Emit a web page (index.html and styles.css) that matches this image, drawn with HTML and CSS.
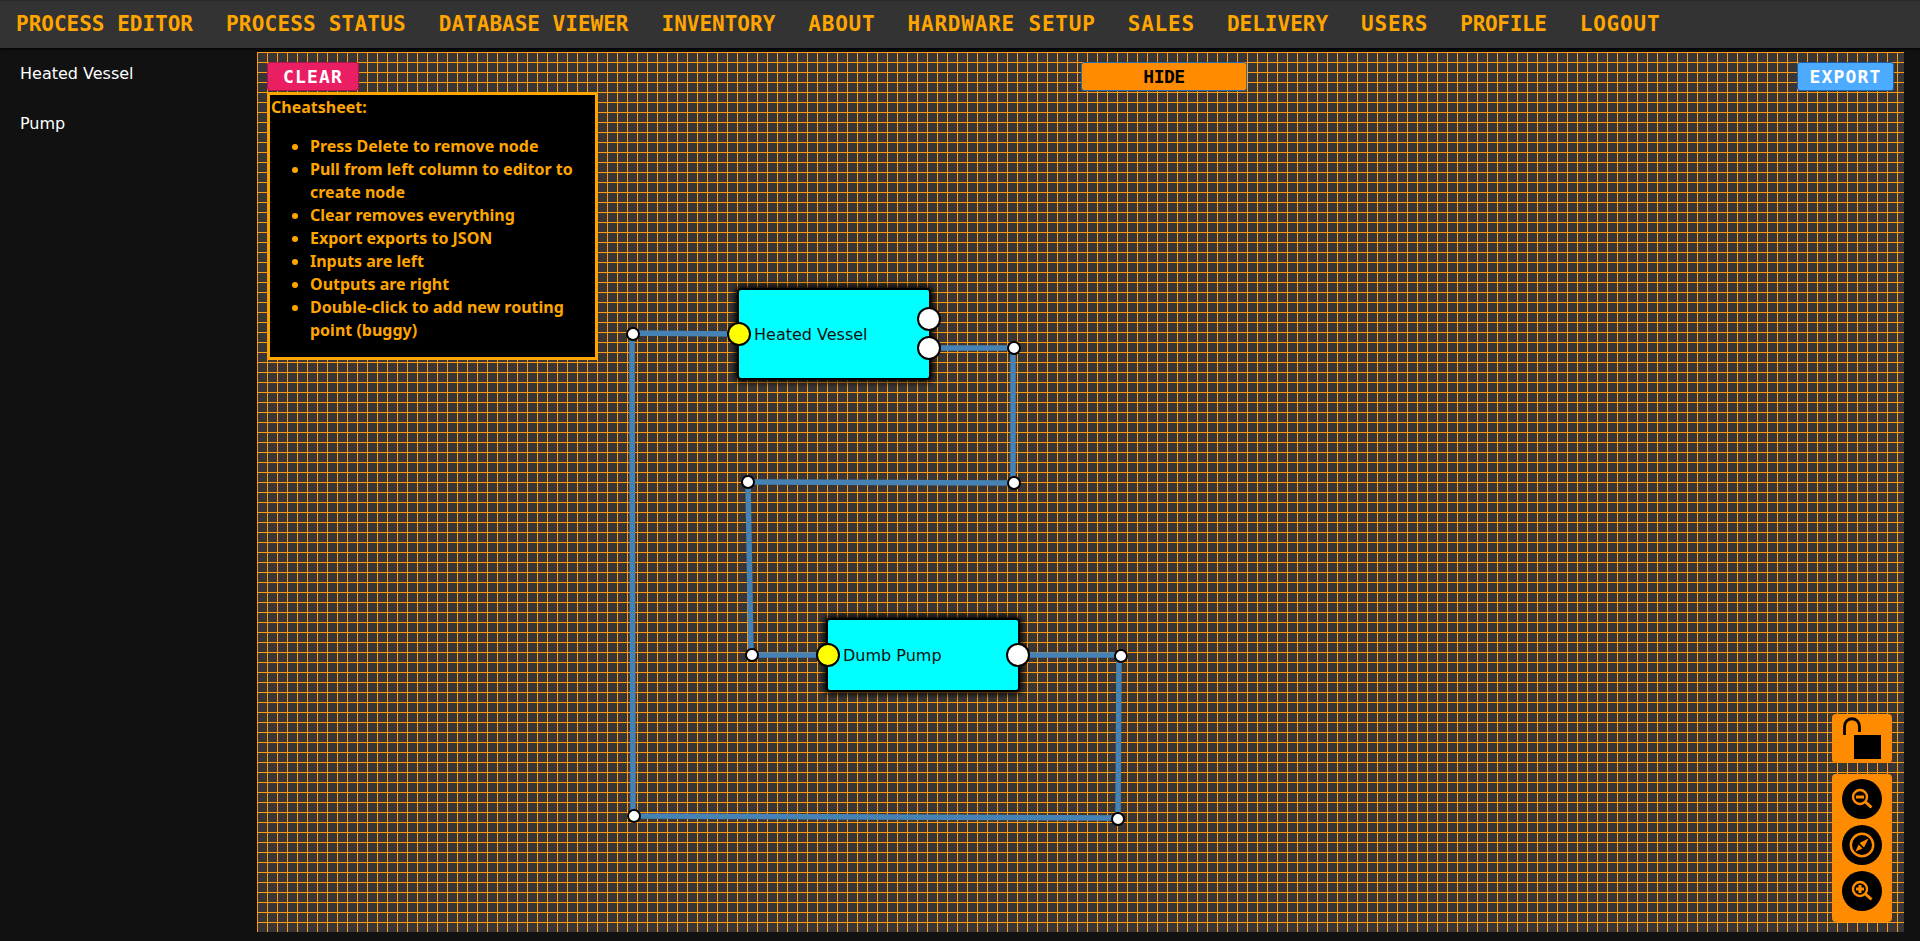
FILE: index.html
```html
<!DOCTYPE html>
<html>
	<head>
		<title>process editor</title>
		<link rel="stylesheet" href="styles.css">
	</head>
	<body>
		<nav class="topnav">
			<a class="navlink">Process Editor</a>
			<a class="navlink navlink-mid">Process Status</a>
			<a class="navlink">Database Viewer</a>
			<a class="navlink">Inventory</a>
			<a class="navlink navlink-wide">About</a>
			<a class="navlink navlink-wide">Hardware Setup</a>
			<a class="navlink navlink-wide">Sales</a>
			<a class="navlink">Delivery</a>
			<a class="navlink navlink-wide">Users</a>
			<a class="navlink navlink-narrow">Profile</a>
			<a class="navlink navlink-wide">Logout</a>
		</nav>
		<div class="main">
			<aside class="sidebar">
				<div class="palette-item">Heated Vessel</div>
				<div class="palette-item">Pump</div>
			</aside>
			<div class="canvas">
				<svg class="wires" width="1647" height="880">
					<polyline points="482,282 375,281 376,764 861,766 862,603 761,603"></polyline>
					<polyline points="672,296 756,296 756,431 491,430 494,603 571,603"></polyline>
				</svg>

				<span class="routepoint point-a"></span>
				<span class="routepoint point-b"></span>
				<span class="routepoint point-c"></span>
				<span class="routepoint point-d"></span>
				<span class="routepoint point-e"></span>
				<span class="routepoint point-f"></span>
				<span class="routepoint point-g"></span>
				<span class="routepoint point-h"></span>

				<div class="node node-vessel">
					<span class="port port-in"></span>
					<span class="port port-out port-out-1"></span>
					<span class="port port-out port-out-2"></span>
					<span class="node-label">Heated Vessel</span>
				</div>
				<div class="node node-pump">
					<span class="port port-in"></span>
					<span class="port port-out"></span>
					<span class="node-label">Dumb Pump</span>
				</div>

				<div class="overlay">
					<div class="toolbar">
						<button class="btn btn-clear">Clear</button>
						<button class="btn btn-hide">Hide</button>
						<button class="btn btn-export">Export</button>
					</div>
					<div class="cheatsheet">
						<div>Cheatsheet:</div>
						<ul>
							<li>Press Delete to remove node</li>
							<li>Pull from left column to editor to create node</li>
							<li>Clear removes everything</li>
							<li>Export exports to JSON</li>
							<li>Inputs are left</li>
							<li>Outputs are right</li>
							<li>Double-click to add new routing point (buggy)</li>
						</ul>
					</div>
				</div>

				<div class="controls">
					<div class="panel panel-lock">
						<svg width="60" height="49" viewBox="0 0 60 49">
							<rect x="22" y="21" width="27" height="24"></rect>
							<path d="M12.5 21 V13 C12.5 2 27.5 2 27.5 13 V18" fill="none" stroke="#000" stroke-width="2.8"></path>
						</svg>
					</div>
					<div class="panel panel-zoom">
						<button class="zoombtn">
							<svg width="40" height="40" viewBox="0 0 40 40">
								<circle cx="18" cy="18" r="7" class="ico"></circle>
								<path d="M23.5 23 L29.5 28.5" class="ico thick"></path>
								<path d="M14 18 H22" class="ico thick"></path>
							</svg>
						</button>
						<button class="zoombtn">
							<svg width="40" height="40" viewBox="0 0 40 40">
								<circle cx="20" cy="20" r="11.2" class="ico"></circle>
								<path d="M26.5 13.5 L17.5 18 L22 22.5 Z" class="ico-fill"></path>
								<path d="M13.5 26.5 L16.5 19.5 L20.5 23.5 Z" class="ico-fill"></path>
							</svg>
						</button>
						<button class="zoombtn">
							<svg width="40" height="40" viewBox="0 0 40 40">
								<circle cx="18" cy="18" r="7" class="ico"></circle>
								<path d="M23.5 23 L29.5 28.5" class="ico thick"></path>
								<path d="M14 18 H22 M18 14 V22" class="ico thick"></path>
							</svg>
						</button>
					</div>
				</div>
			</div>
		</div>
	</body>
</html>
```

FILE: styles.css
```css
* {
	box-sizing: border-box;
}
html,body {
	width: 100%;
	height: 100%;
}
body {
	margin: 0;
	background-color: #111;
	font-family: "DejaVu Sans", sans-serif;
	font-size: 16px;
	overflow: hidden;
}
.topnav {
	display: flex;
	align-items: center;
	gap: 33px;
	height: 48px;
	padding: 0 16px 2px;
	background-color: #333;
	border-top: 1px solid #2a2a2a;
	box-shadow: 0 1px 3px #000;
}
.navlink {
	color: orange;
	font-family: "DejaVu Sans Mono", monospace;
	font-weight: bold;
	font-size: 21px;
	text-transform: uppercase;
}
.navlink-mid {
	letter-spacing: 0.2px;
}
.navlink-wide {
	margin-right: -1px;
	letter-spacing: 0.8px;
}
.navlink-narrow {
	letter-spacing: -0.3px;
}
.main {
	display: flex;
	height: 893px;
}
.sidebar {
	width: 257px;
	flex-shrink: 0;
	padding: 14px 20px;
	color: #fff;
}
.palette-item {
	height: 50px;
	line-height: 24px;
}
.canvas {
	position: relative;
	width: 1647px;
	height: 880px;
	margin-top: 4px;
	background-color: #393535;
	background-image:
		linear-gradient(to right, #ff9c14 1px, transparent 1px),
		linear-gradient(to bottom, #ff9c14 1px, transparent 1px);
	background-size: 10px 10px;
	overflow: hidden;
}
.wires {
	position: absolute;
	top: 0;
	left: 0;
}
.wires polyline {
	fill: none;
	stroke: steelblue;
	stroke-width: 5.5;
}
.routepoint {
	position: absolute;
	width: 14px;
	height: 14px;
	margin: -7px 0 0 -7px;
	background-color: #fff;
	border: 2px solid #000;
	border-radius: 50%;
}
.point-a { left: 376px; top: 282px; }
.point-b { left: 377px; top: 764px; }
.point-c { left: 861px; top: 767px; }
.point-d { left: 864px; top: 604px; }
.point-e { left: 757px; top: 296px; }
.point-f { left: 757px; top: 431px; }
.point-g { left: 491px; top: 430px; }
.point-h { left: 495px; top: 603px; }
.node {
	position: absolute;
	display: flex;
	align-items: center;
	padding-left: 15px;
	background-color: cyan;
	border: 2px solid #000;
	border-radius: 4px;
	box-shadow: 0 0 6px 2px #000;
	color: #111;
}
.node-vessel {
	left: 480px;
	top: 236px;
	width: 194px;
	height: 92px;
}
.node-pump {
	left: 569px;
	top: 566px;
	width: 194px;
	height: 74px;
}
.port {
	position: absolute;
	width: 24px;
	height: 24px;
	top: 50%;
	margin-top: -12px;
	background-color: #fff;
	border: 2px solid #000;
	border-radius: 50%;
}
.port-in {
	left: -12px;
	background-color: yellow;
}
.port-out {
	right: -12px;
}
.port-out-1 {
	top: 29px;
}
.port-out-2 {
	top: 58px;
}
.overlay {
	position: absolute;
	top: 10px;
	left: 10px;
	right: 10px;
}
.toolbar {
	display: flex;
	height: 29px;
}
.btn {
	height: 29px;
	padding: 0;
	border-radius: 3px;
	border: 1px solid;
	font-family: "DejaVu Sans Mono", monospace;
	font-weight: bold;
	font-size: 18px;
	letter-spacing: 1.2px;
	text-transform: uppercase;
}
.btn-clear {
	width: 92px;
	background-color: #e91e63;
	border-color: #a5164a;
	color: #fff;
}
.btn-hide {
	width: 166px;
	margin-left: 722px;
	background-color: darkorange;
	border-color: #2a6aa8;
	color: #000;
	letter-spacing: -0.5px;
}
.btn-export {
	width: 97px;
	margin-left: auto;
	background-color: #4dabff;
	border-color: #1c5fa8;
	color: #fff;
}
.cheatsheet {
	width: 331px;
	margin-top: 1px;
	padding: 1px;
	background-color: #000;
	border: 3px solid orange;
	color: orange;
	font-family: "Noto Sans", sans-serif;
	font-weight: bold;
	line-height: 23px;
}
.cheatsheet ul {
	margin: 16px 0 14px;
	padding-left: 39px;
}
.controls {
	position: absolute;
	right: 12px;
	bottom: 10px;
	display: flex;
	flex-direction: column;
	gap: 11px;
	width: 60px;
}
.panel {
	background-color: darkorange;
	border-radius: 4px;
}
.panel-lock {
	height: 49px;
}
.panel-lock svg {
	display: block;
}
.panel-zoom {
	display: flex;
	flex-direction: column;
	align-items: center;
	gap: 6px;
	height: 148px;
	padding-top: 5px;
}
.zoombtn {
	width: 40px;
	height: 40px;
	padding: 0;
	background-color: #000;
	border: 0;
	border-radius: 50%;
}
.zoombtn svg {
	display: block;
}
.ico {
	fill: none;
	stroke: darkorange;
	stroke-width: 2.4;
}
.thick {
	stroke-width: 3;
}
.ico-fill {
	fill: darkorange;
}
```
